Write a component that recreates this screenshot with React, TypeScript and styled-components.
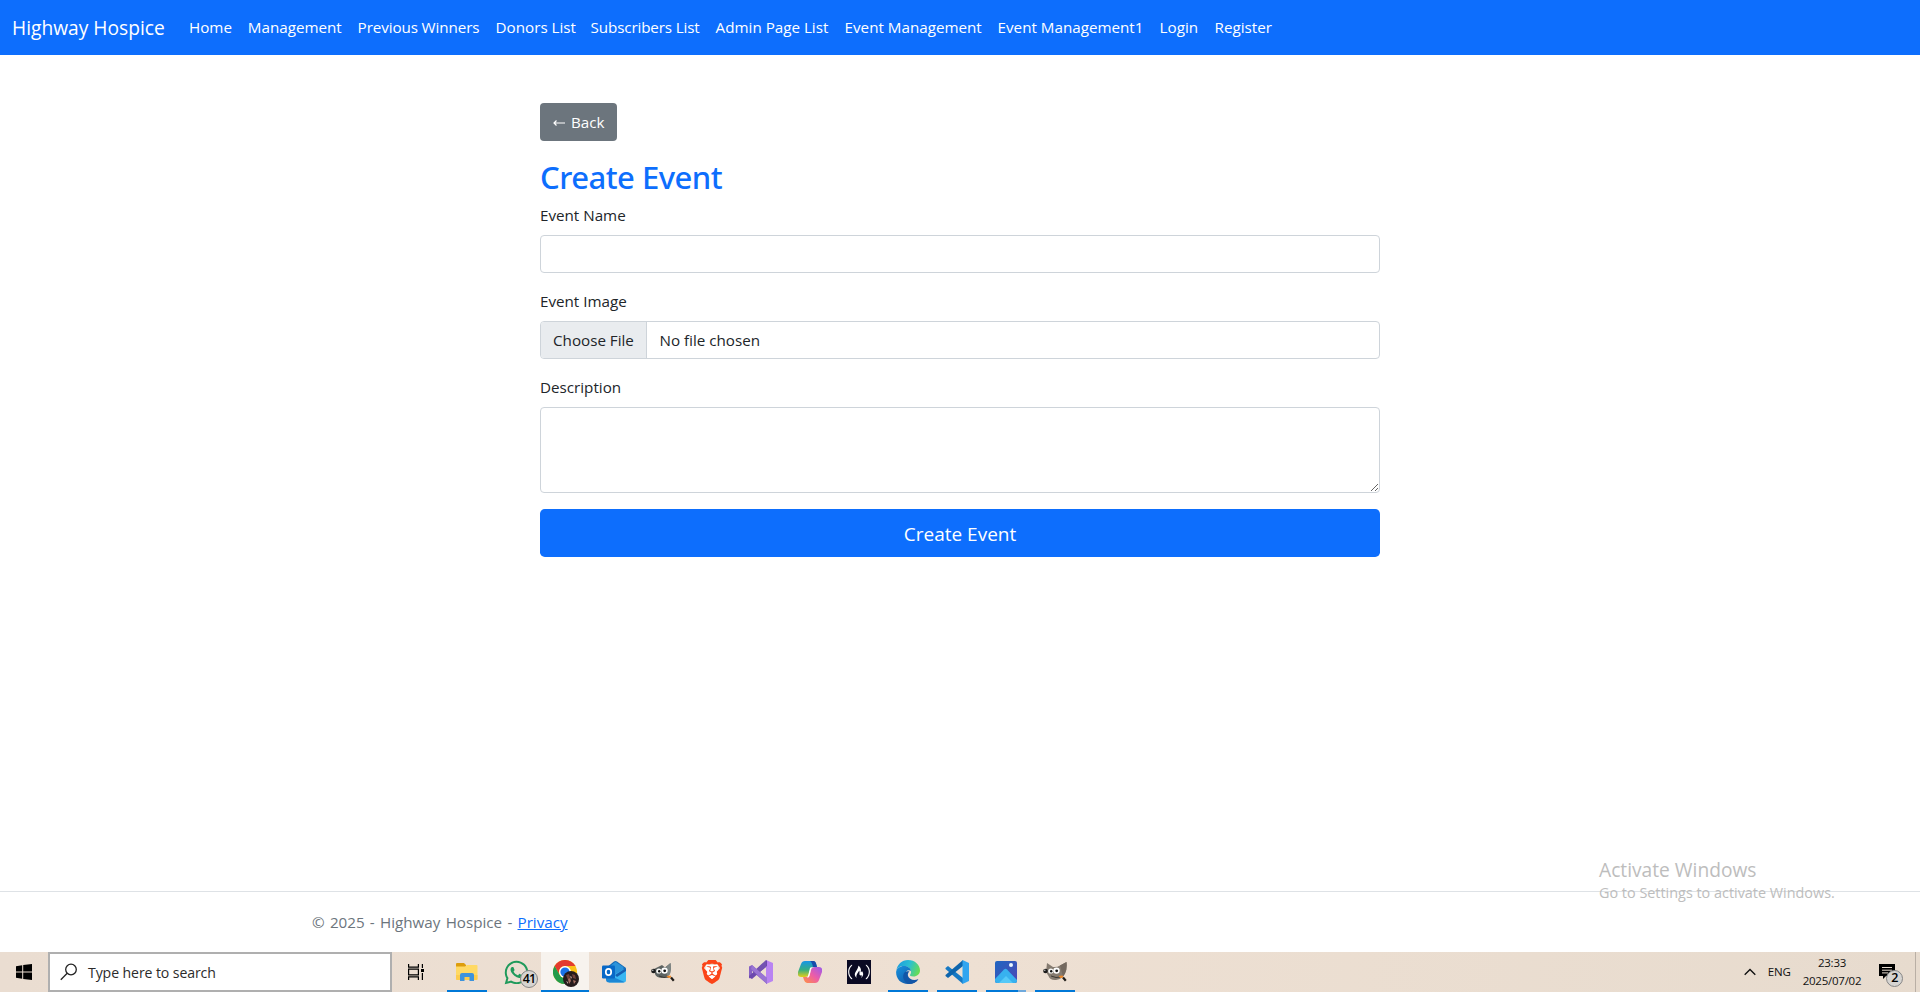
import React from 'react';
import styled, { createGlobalStyle } from 'styled-components';
import { FaWhatsapp, FaBrave, FaFreeCodeCamp } from 'react-icons/fa6';

const GlobalStyle = createGlobalStyle`
  *, *::before, *::after { box-sizing: border-box; }
  body {
    margin: 0;
    background: #fff;
    color: #212529;
    font-family: "Open Sans", "Noto Sans", sans-serif;
    font-size: 15.2px;
    line-height: 24px;
  }
`;

const Screen = styled.div`
  display: flex;
  flex-direction: column;
  position: relative;
  width: 100%;
  height: 992px;
  overflow: hidden;
`;

const Navbar = styled.header`
  display: flex;
  align-items: center;
  height: 55px;
  padding: 0 12px 1px;
  background: #0d6efd;
  color: #fff;
`;

const Brand = styled.a`
  width: 153px;
  margin-right: 16px;
  padding-top: 2px;
  font-size: 19.2px;
  line-height: 30px;
  white-space: nowrap;
`;

const NavList = styled.nav`
  display: flex;
`;

const NavLink = styled.a<{ $width: number; $spacing?: number }>`
  width: ${(p) => p.$width}px;
  padding: 8px;
  letter-spacing: ${(p) => p.$spacing ?? 0}px;
  white-space: nowrap;
`;

const Main = styled.main`
  flex: 1;
  display: flex;
  flex-direction: column;
  align-items: flex-start;
  width: 840px;
  margin: 0 auto;
  padding-top: 48px;
`;

const BackButton = styled.button`
  display: flex;
  align-items: center;
  gap: 6px;
  width: 77px;
  height: 38px;
  margin-bottom: 16px;
  padding: 0 0 0 13px;
  border: 0;
  border-radius: 4px;
  background: #6c757d;
  color: #fff;
  font: inherit;
`;

const Arrow = styled.svg`
  width: 12px;
  height: 8px;
  margin-top: 2px;
`;

const Heading = styled.h2`
  height: 38px;
  margin: 0 0 8px;
  color: #0d6efd;
  font-family: "Noto Sans", "Open Sans", sans-serif;
  font-size: 31px;
  font-weight: 500;
  line-height: 40px;
  letter-spacing: -0.5px;
`;

const Form = styled.form`
  width: 100%;
`;

const Field = styled.div`
  display: flex;
  flex-direction: column;
  margin-bottom: 16px;
`;

const Label = styled.label`
  margin-bottom: 8px;
`;

const TextInput = styled.input`
  height: 38px;
  padding: 6px 12px;
  border: 1px solid #ced4da;
  border-radius: 4px;
  background: #fff;
  font: inherit;
`;

const FileInput = styled.div`
  display: flex;
  height: 38px;
  border: 1px solid #ced4da;
  border-radius: 4px;
  overflow: hidden;
  line-height: 36px;
`;

const FileButton = styled.span`
  width: 106px;
  padding-left: 12px;
  border-right: 1px solid #ced4da;
  background: #e9ecef;
`;

const FileName = styled.span`
  padding-left: 12.500px;
`;

const TextArea = styled.textarea`
  display: block;
  height: 86px;
  padding: 6px 12px;
  border: 1px solid #ced4da;
  border-radius: 4px;
  resize: vertical;
  font: inherit;
`;

const SubmitButton = styled.button`
  display: block;
  width: 100%;
  height: 48px;
  padding: 0;
  border: 0;
  border-radius: 4.8px;
  background: #0d6efd;
  color: #fff;
  font: inherit;
  font-size: 19px;
  line-height: 50px;
`;

const Footer = styled.footer`
  height: 61px;
  padding-left: 312px;
  border-top: 1px solid #dee2e6;
  color: #6c757d;
  line-height: 60px;
  word-spacing: 1.3px;
`;

const PrivacyLink = styled.a`
  color: #0d6efd;
  text-decoration: underline;
`;

const Watermark = styled.div`
  position: absolute;
  left: 1599px;
  top: 856px;
  color: #bdbdbd;
  font-size: 14.4px;
  line-height: 20px;
  white-space: nowrap;
`;

const WatermarkTitle = styled.div`
  height: 27px;
  font-size: 19.2px;
  line-height: 28px;
`;

const Taskbar = styled.div`
  display: flex;
  height: 40px;
  background: linear-gradient(90deg, #eaddd1, #eee0d3 50%, #e7dbce);
  color: #111;
`;

const StartButton = styled.div`
  display: grid;
  place-items: center;
  width: 48px;
`;

const SearchBox = styled.div`
  display: flex;
  align-items: center;
  width: 344px;
  padding-left: 10px;
  border: 2px solid #afafaf;
  background: #fff;
  color: #2b2b2b;
  font-size: 14.1px;
  letter-spacing: -0.1px;
`;

const SearchIcon = styled.svg`
  width: 18px;
  height: 18px;
  margin-right: 10px;
`;

const SearchText = styled.span`
  padding-top: 2px;
`;

const TaskView = styled.div`
  display: grid;
  place-items: center;
  width: 48px;
  margin-right: 3px;
`;

const Apps = styled.div`
  display: flex;
  gap: 1px;
`;

const TaskButton = styled.div<{ $active?: boolean }>`
  position: relative;
  display: grid;
  place-items: center;
  width: 48px;
  height: 40px;
  background: ${(p) => (p.$active ? '#f7f3ee' : 'transparent')};
`;

const Underline = styled.div<{ $wide?: boolean; $split?: boolean }>`
  position: absolute;
  left: ${(p) => (p.$wide ? 0 : 4)}px;
  right: ${(p) => (p.$wide ? 0 : 4)}px;
  bottom: 0;
  height: 2px;
  background: ${(p) => (p.$split ? 'linear-gradient(90deg, #0078d7 32px, #6fa9dc 32px)' : '#0078d7')};
`;

const Badge = styled.span<{ $x: number; $y: number; $size: number }>`
  position: absolute;
  left: ${(p) => p.$x}px;
  top: ${(p) => p.$y}px;
  width: ${(p) => p.$size}px;
  height: ${(p) => p.$size}px;
  border: 1px solid #858585;
  border-radius: 50%;
  background: #d6d4d1;
  color: #000;
  font-size: 12.5px;
  font-weight: 600;
  line-height: ${(p) => p.$size - 3}px;
  letter-spacing: -0.8px;
  text-align: center;
`;

const Tray = styled.div`
  display: flex;
  align-items: center;
  margin-left: auto;
  font-size: 11.5px;
  line-height: 18px;
  letter-spacing: -0.25px;
`;

const Chevron = styled.svg`
  width: 12px;
  height: 8px;
  margin-right: 12px;
`;

const Clock = styled.div`
  width: 64px;
  margin-left: 9.500px;
  text-align: center;
`;

const Notifications = styled.div`
  position: relative;
  width: 36px;
  height: 40px;
  margin-left: 15px;
`;

const NoteIcon = styled.svg`
  display: block;
  width: 16px;
  height: 18px;
  margin-top: 12px;
`;

const ShowDesktop = styled.div`
  width: 5px;
  height: 40px;
  border-left: 1px solid #b9afa5;
`;

const BraveMark = styled.div`
  display: grid;
  color: #fb4418;
  svg { grid-area: 1 / 1; }
`;

const CodeMark = styled.div`
  display: grid;
  place-items: center;
  width: 24px;
  height: 24px;
  background: #0a0a23;
  color: #fff;
`;

const links: { label: string; width: number; spacing?: number }[] = [
  { label: 'Home', width: 58.8 },
  { label: 'Management', width: 109.8 },
  { label: 'Previous Winners', width: 138, spacing: -0.1 },
  { label: 'Donors List', width: 95 },
  { label: 'Subscribers List', width: 125, spacing: -0.13 },
  { label: 'Admin Page List', width: 129 },
  { label: 'Event Management', width: 153 },
  { label: 'Event Management1', width: 162 },
  { label: 'Login', width: 55 },
  { label: 'Register', width: 73 },
];

const WindowsIcon = () => (
  <svg width="16" height="16" viewBox="0 0 16 16">
    <path d="M0 2.2 6.2 1.2V7.5H0zM7.2 1 16 0V7.5H7.2zM0 8.5H6.2V14.8L0 13.8zM7.2 8.5H16V16L7.2 15z" fill="#000" />
  </svg>
);

const TaskViewIcon = () => (
  <svg width="18" height="16" viewBox="0 0 18 16" fill="none" stroke="#000" strokeWidth="1.2">
    <path d="M1.6 0V3.2H11.4V0M1.6 16V12.8H11.4V16M1.6 5.2H11.4V10.8H1.6zM15.4 0V4M15.4 9V16" />
    <rect x="14" y="5" width="3" height="3" fill="#000" stroke="none" />
  </svg>
);

const FolderIcon = () => (
  <svg width="24" height="24" viewBox="0 0 24 24">
    <path d="M1 4q0-1 1-1h7l2 2v3H1z" fill="#dd9d0c" />
    <path d="M1 6.5h9l2-1.5h9.5q1 0 1 1V19.5H1z" fill="#ffd964" />
    <path d="M1 15h21.5v4q0 1-1 1H2q-1 0-1-1z" fill="#fdcc4c" />
    <path d="M5 21v-6q0-2 2-2h10q2 0 2 2v6h-4.500v-4H9.500v4z" fill="#3d93dc" />
  </svg>
);

const ChromeIcon = () => (
  <svg width="24" height="24" viewBox="0 0 24 24">
    <circle cx="12" cy="12" r="12" fill="#fbc116" />
    <path d="M1.600 6A12 12 0 0 1 22.400 6H12a6 6 0 0 0-5.200 9z" fill="#e33b2e" />
    <path d="M1.600 6A12 12 0 0 0 12 24l5.200-9a6 6 0 0 1-10.400 0z" fill="#229b4b" />
    <circle cx="12" cy="12" r="6" fill="#fff" />
    <circle cx="12" cy="12" r="4.600" fill="#1a73e8" />
  </svg>
);

const AvatarFrame = styled.svg`
  position: absolute;
  left: 22px;
  top: 19px;
`;

const Avatar = () => (
  <AvatarFrame width="16" height="16" viewBox="0 0 16 16">
    <circle cx="8" cy="8" r="8" fill="#261b1c" />
    <path d="M3 4l3-1 1 3-2 3zM9 3l3 1 1 4-3-1z" fill="#71413a" />
    <path d="M5 8l2-1 1 3-2 3zM10 9l3 1-2 3z" fill="#a66f60" />
    <path d="M7 5l2 1-1 2zM3 10l2 1v2z" fill="#c4a69b" />
  </AvatarFrame>
);

const OutlookIcon = () => (
  <svg width="24" height="24" viewBox="0 0 24 24">
    <path d="M4 8 12 1.500q1.500-1 3 0L24 8v5H4z" fill="#1267b4" />
    <path d="M8 6l5.500-4.300 8 5.300v8H8z" fill="#2b93da" />
    <path d="M24 8v12q0 2.500-2.500 2.500H7l4-7z" fill="#38b6f2" />
    <path d="M4 14l18.500 8q-1 .5-2.500.5H7q-3 0-3-3z" fill="#1b87d5" />
    <path d="M24 8 13 15l2 2 9-6z" fill="#1560b3" />
    <rect y="5.500" width="13" height="13" rx="1.300" fill="#0868c7" />
    <ellipse cx="6.500" cy="12" rx="2.700" ry="3.200" fill="none" stroke="#fff" strokeWidth="1.700" />
  </svg>
);

const GimpIcon = ({ light }: { light?: boolean }) => (
  <svg width="24" height="24" viewBox="0 0 24 24">
    <path
      d={light
        ? 'M4 3 10 7q4 .5 7-1.500L23.500 2q.8 7-1.500 11.500-2.500 5.500-9 6.500-6 .5-7.500-4L3 12z'
        : 'M3 9 7 7l4-2 3 2.500 5.500-4.500q1 6-.5 11-3 4-8.500 4-5.500-.5-6.500-4z'}
      fill={light ? '#857b70' : '#5c6261'}
    />
    <path
      d={light ? 'M17 5.500 23.500 2q.8 7-1.500 11.500l-2 3z' : 'M15 7l4.500-4q1 6-.5 11l-3 2z'}
      fill={light ? '#74695f' : '#7d8584'}
    />
    <circle cx="2.500" cy="11" r="2.300" fill="#1c1c1c" />
    <circle cx="1.800" cy="10.200" r=".7" fill="#d8d8d8" />
    <circle cx="7.800" cy="11" r="2.600" fill="#f6f6f3" />
    <circle cx="13.500" cy="10.600" r="3.200" fill="#fff" />
    <circle cx="8.200" cy="11.200" r="1.200" fill="#111" />
    <circle cx="13.700" cy="10.800" r="1.400" fill="#111" />
    <path d="M8 16q5 2.500 10 1" fill="none" stroke="#3d3933" strokeWidth="1" />
    <path d="M15.500 16l4-.5 1 2-3 .5z" fill="#f18825" />
    <path d="M20 17.500l2.800 3.300" stroke="#1f1b17" strokeWidth="2.200" />
  </svg>
);

const VisualStudioIcon = () => (
  <svg width="24" height="24" viewBox="0 0 24 24">
    <path d="M17 0 24 3v18l-7 3z" fill="#b983f2" />
    <path d="M0 6.500 3 5 18 18v6L3 11v6l-3 1.500z" fill="#8661c5" />
    <path d="M0 17.500 3 19 18 6V0L0 16z" fill="#6c49ad" />
    <path d="M17 0v7L7 15l-3-3z" fill="#7452b2" />
    <path d="M3 5l15 13v6L2 9z" fill="#9974d3" />
  </svg>
);

const CopilotIcon = () => (
  <svg width="24" height="24" viewBox="0 0 24 24">
    <defs>
      <linearGradient id="copA" x1="0" y1="0" x2="0" y2="1">
        <stop offset="0" stopColor="#1695e8" /><stop offset=".55" stopColor="#34ae82" /><stop offset="1" stopColor="#e5cf19" />
      </linearGradient>
      <linearGradient id="copB" x1="1" y1="0" x2="0" y2="1">
        <stop offset="0" stopColor="#9a5bed" /><stop offset=".5" stopColor="#ed5da7" /><stop offset="1" stopColor="#ff943f" />
      </linearGradient>
    </defs>
    <path d="M7 1h8q2 0 3 3l1 3h-4q-2 0-3 3l-1 4q-1 3-4 3H3q-4 0-3-5L3 4q1-3 4-3z" fill="url(#copA)" />
    <path d="M17 23H9q-2 0-3-3l-1-3h4q2 0 3-3l1-4q1-3 4-3h4q4 0 3 5l-3 8q-1 3-4 3z" fill="url(#copB)" />
    <path d="M13 1h3q2 0 3 6h-4q-1-5-3-6z" fill="#174cab" />
    <path d="M12 8q1-1 2-1-1 1-1.500 4l-1 5q-1 2-2.500 2 1-1 1.500-4z" fill="#fff" />
  </svg>
);

const EdgeIcon = () => (
  <svg width="24" height="24" viewBox="0 0 24 24">
    <defs>
      <linearGradient id="edgeTop" x1="0" y1=".3" x2="1" y2=".6">
        <stop offset="0" stopColor="#1c9dde" /><stop offset=".5" stopColor="#2bbfd2" /><stop offset="1" stopColor="#69dd50" />
      </linearGradient>
      <linearGradient id="edgeLow" x1="0" y1="0" x2="1" y2="1">
        <stop offset="0" stopColor="#1793df" /><stop offset="1" stopColor="#124b9d" />
      </linearGradient>
    </defs>
    <path d="M.3 11C1 4.500 6 0 12 0c7 0 12 5 12 10.500 0 3.500-3 6-6.500 6-3 0-4-1-3.300-2 .8-1 1-2 .8-3C14.500 8 11 6 8 6 4 6 1 8 .3 11z" fill="url(#edgeTop)" />
    <path d="M.1 12C.5 8.500 4 6 8 6c3.500 0 6.500 2 7 5-2.500-2-6 0-6 4 0 4 4 7 8 6.500 2-.2 3.500-1 5-2C20 22.500 16 24 12 24 5 24 0 19 .1 12z" fill="url(#edgeLow)" />
    <path d="M9 12c-4 4-1 10.500 4 12 4 0 7.500-1.800 9.500-5-5 2.500-9.500 0-10.500-3-.5-2 .2-3.500 1.500-4.500-1.500-.5-3.300-.5-4.500.5z" fill="#1256a8" />
  </svg>
);

const CodeIcon = () => (
  <svg width="24" height="24" viewBox="0 0 24 24">
    <path d="M.5 8 3 6l15 12v6L.5 9z" fill="#1679c4" />
    <path d="M.5 16 3 18 18 6V0L.5 15z" fill="#0d65ad" />
    <path d="M17.500 0 24 3v18l-6.500 3z" fill="#31a5f0" />
  </svg>
);

const PhotosIcon = () => (
  <svg width="24" height="24" viewBox="0 0 24 24">
    <defs>
      <linearGradient id="photoBg" x1="0" y1="0" x2="1" y2="1">
        <stop offset="0" stopColor="#1e65c1" /><stop offset="1" stopColor="#5048b5" />
      </linearGradient>
      <clipPath id="photoClip"><rect x="1" y="1" width="22" height="22" rx="2" /></clipPath>
    </defs>
    <g clipPath="url(#photoClip)">
      <rect x="1" y="1" width="22" height="22" fill="url(#photoBg)" />
      <path d="M0 20 10 9.500q1.500-1.500 3 0L24 21v3H0z" fill="#37b1ef" />
      <path d="M4 24l8-8 8 8z" fill="#55c9f8" />
    </g>
    <circle cx="17" cy="5" r="2" fill="#eaf6ff" />
  </svg>
);

export default function App() {
  return (
    <Screen>
      <GlobalStyle />
      <Navbar>
        <Brand>Highway Hospice</Brand>
        <NavList>
          {links.map((l) => (
            <NavLink key={l.label} $width={l.width} $spacing={l.spacing}>{l.label}</NavLink>
          ))}
        </NavList>
      </Navbar>

      <Main>
        <BackButton type="button">
          <Arrow viewBox="0 0 12 8" fill="none" stroke="#fff" strokeWidth="1.200">
            <path d="M12 4H1M3.500 1.500 1 4l2.500 2.500" />
          </Arrow>
          Back
        </BackButton>
        <Heading>Create Event</Heading>
        <Form>
          <Field>
            <Label>Event Name</Label>
            <TextInput type="text" />
          </Field>
          <Field>
            <Label>Event Image</Label>
            <FileInput>
              <FileButton>Choose File</FileButton>
              <FileName>No file chosen</FileName>
            </FileInput>
          </Field>
          <Field>
            <Label>Description</Label>
            <TextArea />
          </Field>
          <SubmitButton type="button">Create Event</SubmitButton>
        </Form>
      </Main>

      <Footer>
        © 2025 - Highway Hospice - <PrivacyLink>Privacy</PrivacyLink>
      </Footer>

      <Taskbar>
        <StartButton><WindowsIcon /></StartButton>
        <SearchBox>
          <SearchIcon viewBox="0 0 18 18" fill="none" stroke="#222" strokeWidth="1.300">
            <circle cx="11" cy="6.500" r="5.300" />
            <path d="M7.200 10.300.8 16.700" />
          </SearchIcon>
          <SearchText>Type here to search</SearchText>
        </SearchBox>
        <TaskView><TaskViewIcon /></TaskView>
        <Apps>
          <TaskButton><FolderIcon /><Underline /></TaskButton>
          <TaskButton>
            <FaWhatsapp size={27} color="#1f9a5b" />
            <Badge $x={28} $y={18} $size={18}>41</Badge>
          </TaskButton>
          <TaskButton $active><ChromeIcon /><Avatar /><Underline $wide /></TaskButton>
          <TaskButton><OutlookIcon /></TaskButton>
          <TaskButton><GimpIcon /></TaskButton>
          <TaskButton>
            <BraveMark>
              <svg width="24" height="24" viewBox="0 0 24 24"><path d="M6 5h12l1 8-7 8-7-8z" fill="#fff" /></svg>
              <FaBrave size={24} />
            </BraveMark>
          </TaskButton>
          <TaskButton><VisualStudioIcon /></TaskButton>
          <TaskButton><CopilotIcon /></TaskButton>
          <TaskButton><CodeMark><FaFreeCodeCamp size={22} /></CodeMark></TaskButton>
          <TaskButton><EdgeIcon /><Underline /></TaskButton>
          <TaskButton><CodeIcon /><Underline /></TaskButton>
          <TaskButton><PhotosIcon /><Underline $split /></TaskButton>
          <TaskButton><GimpIcon light /><Underline /></TaskButton>
        </Apps>
        <Tray>
          <Chevron viewBox="0 0 12 8" fill="none" stroke="#111" strokeWidth="1.400">
            <path d="M.7 6.700 6 1.400l5.300 5.300" />
          </Chevron>
          ENG
          <Clock>23:33<br />2025/07/02</Clock>
          <Notifications>
            <NoteIcon viewBox="0 0 16 18">
              <path d="M0 0h16v12H7l-3 3v-3H0z" fill="#000" />
              <path d="M3 3.500h10M3 6.200h10M3 8.900h6" stroke="#e7dbce" strokeWidth="1" />
            </NoteIcon>
            <Badge $x={7} $y={18} $size={17}>2</Badge>
          </Notifications>
          <ShowDesktop />
        </Tray>
      </Taskbar>

      <Watermark>
        <WatermarkTitle>Activate Windows</WatermarkTitle>
        Go to Settings to activate Windows.
      </Watermark>
    </Screen>
  );
}
